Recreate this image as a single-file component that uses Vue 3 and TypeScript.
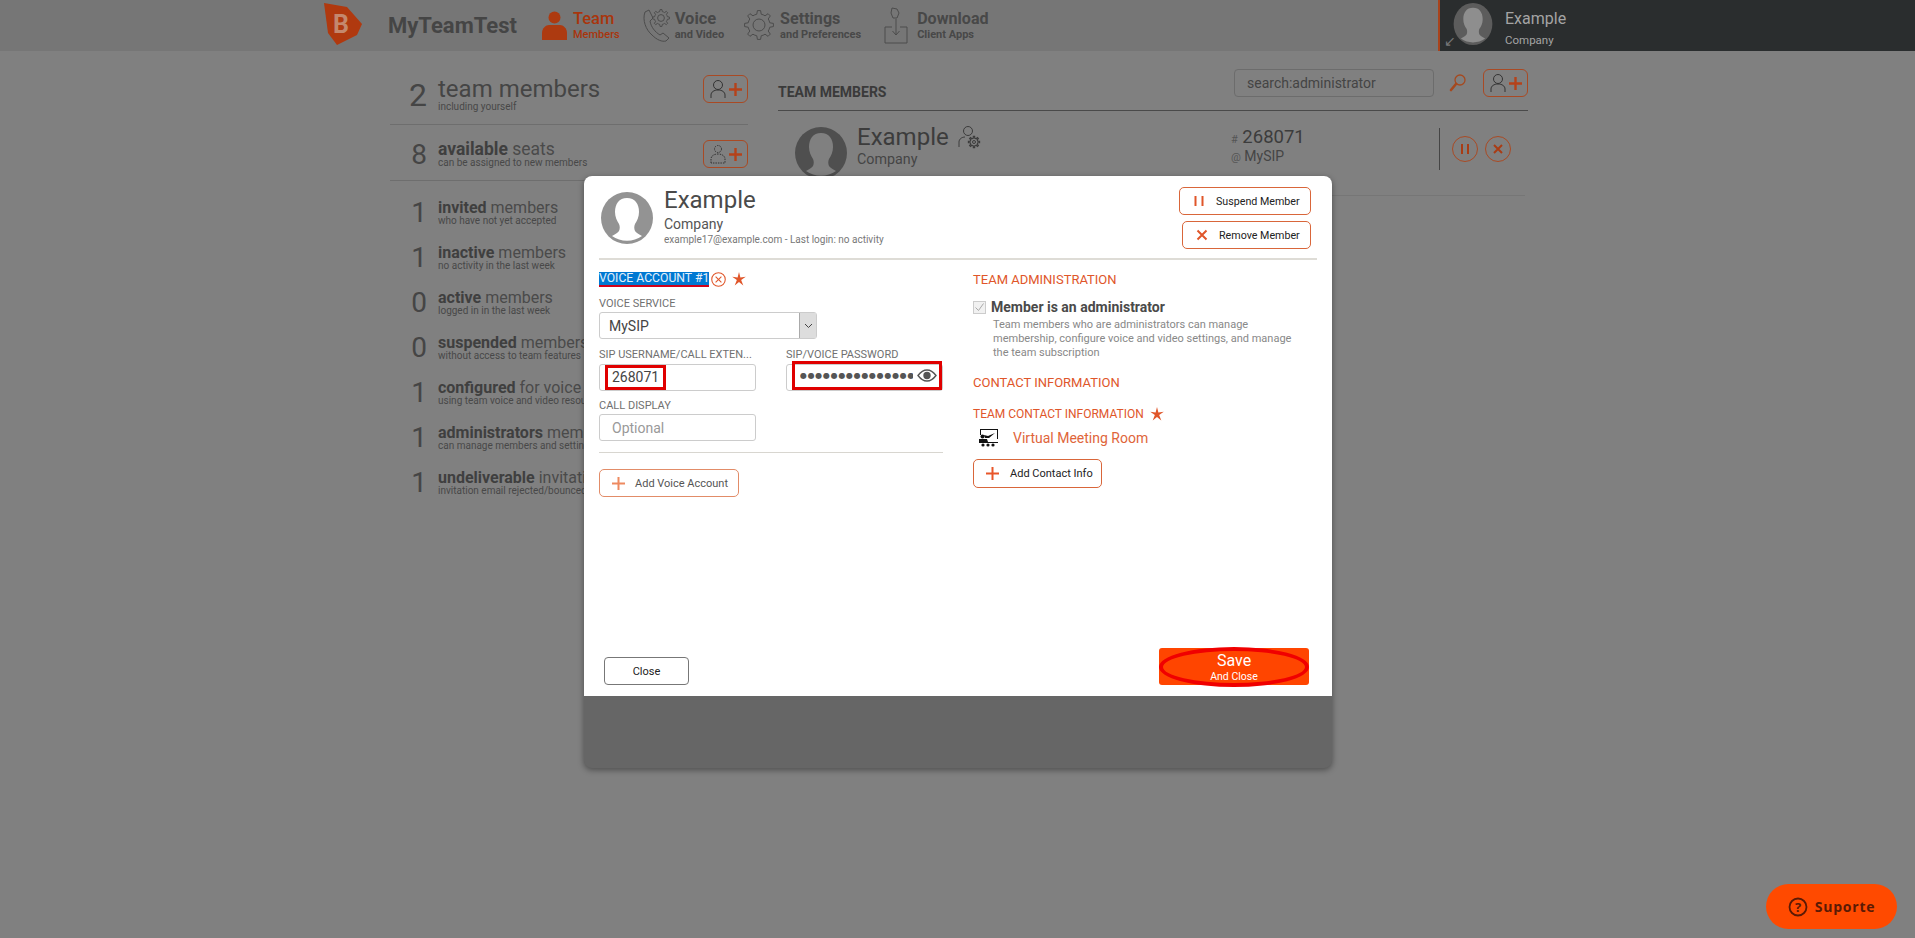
<script setup lang="ts">
const stats = [
  { n: 1, bold: 'invited', rest: ' members', sub: 'who have not yet accepted' },
  { n: 1, bold: 'inactive', rest: ' members', sub: 'no activity in the last week' },
  { n: 0, bold: 'active', rest: ' members', sub: 'logged in in the last week' },
  { n: 0, bold: 'suspended', rest: ' members', sub: 'without access to team features' },
  { n: 1, bold: 'configured', rest: ' for voice and video', sub: 'using team voice and video resources' },
  { n: 1, bold: 'administrators', rest: ' members', sub: 'can manage members and settings' },
  { n: 1, bold: 'undeliverable', rest: ' invitations', sub: 'invitation email rejected/bounced' }
]

// gear outline used by the nav icons
function gear(cx: number, cy: number, r1: number, r2: number, teeth: number) {
  const pts: string[] = []
  const step = (Math.PI * 2) / teeth
  for (let i = 0; i < teeth; i++) {
    const a = i * step
    const list: [number, number][] = [
      [r1, a - step * 0.5],
      [r1, a - step * 0.26],
      [r2, a - step * 0.14],
      [r2, a + step * 0.14],
      [r1, a + step * 0.26]
    ]
    for (const [r, t] of list) {
      pts.push((cx + r * Math.cos(t)).toFixed(2) + ',' + (cy + r * Math.sin(t)).toFixed(2))
    }
  }
  return 'M' + pts.join('L') + 'Z'
}
const bust = 'M26 6c-8 0-12 6-12 14 0 5 2 9 4 12 1 2 1 5 0 7-1 2-4 3-7 5a26 26 0 0 0 30 0c-3-2-6-3-7-5-1-2-1-5 0-7 2-3 4-7 4-12 0-8-4-14-12-14z'
const starPts = '6.500,0 7.800,5 12.800,4.500 8.500,7.500 10.500,12.500 6.500,9.200 2.500,12.500 4.500,7.500 0.200,4.500 5.200,5'
</script>

<template>
  <div class="page">
    <header class="topbar">
      <svg class="logo" width="38" height="43" viewBox="0 0 38 43">
        <polygon points="0,0 23,4 38,21 33,32 13,42 4,30" fill="#b0390f" />
        <text x="17" y="30" text-anchor="middle" class="logo-b">B</text>
      </svg>
      <div class="brand">MyTeamTest</div>

      <div class="nav nav-team">
        <svg width="25" height="30" viewBox="0 0 25 30">
          <circle cx="12.500" cy="6.500" r="6" fill="#ad3a10" />
          <path d="M0 29V22c0-5 4-8 7-8h11c3 0 7 3 7 8v7z" fill="#ad3a10" />
        </svg>
        <div class="nav-text active"><b>Team</b><span>Members</span></div>
      </div>

      <div class="nav nav-voice">
        <svg width="30" height="40" viewBox="0 0 30 40" fill="none" stroke="#4c4c4c" stroke-width="1">
          <path d="M4 7 8 5l4 8-3 3c1 6 5 11 10 14l3-2 6 5-3 3c-4 1-9-1-14-6C5 25 1 15 4 7z" />
          <path :d="gear(20, 13, 6.500, 8.500, 8)" />
          <circle cx="20" cy="13" r="3.400" />
        </svg>
        <div class="nav-text"><b>Voice</b><span>and Video</span></div>
      </div>

      <div class="nav nav-settings">
        <svg width="30" height="40" viewBox="0 0 30 40" fill="none" stroke="#4c4c4c" stroke-width="1">
          <path :d="gear(15, 20, 11, 14.500, 8)" />
          <circle cx="15" cy="20" r="6" />
        </svg>
        <div class="nav-text"><b class="narrow">Settings</b><span>and Preferences</span></div>
      </div>

      <div class="nav nav-download">
        <svg width="24" height="40" viewBox="0 0 24 40" fill="none" stroke="#4c4c4c" stroke-width="1">
          <path d="M8 3l5 1 2 4-2 5-4 0-2-5z" />
          <path d="M12 14v16M8.500 26l3.500 4 3.500-4" />
          <path d="M8 22H1v16h22V22h-7" />
        </svg>
        <div class="nav-text"><b class="narrow">Download</b><span>Client Apps</span></div>
      </div>

      <div class="account">
        <span class="shrink">↙</span>
        <svg class="account-pic" width="42" height="42" viewBox="0 0 52 52">
          <ellipse cx="26" cy="26" rx="24" ry="26" fill="#5c5c5c" />
          <path :d="bust" fill="#8e8e8e" />
        </svg>
        <div class="account-text">
          <div class="account-name">Example</div>
          <div class="account-co">Company</div>
        </div>
      </div>
    </header>

    <div class="content">
      <aside class="side">
        <div class="stat stat-big">
          <div class="num num-big">2</div>
          <div class="stat-text">
            <div class="big-title">team members</div>
            <div class="sub">including yourself</div>
          </div>
          <button class="add-btn add-up">
            <svg width="32" height="20" viewBox="0 0 32 20" fill="none">
              <circle cx="8" cy="6" r="4.500" stroke="#333" />
              <path d="M1 19v-3c0-3 3-5 7-5s7 2 7 5v3" stroke="#333" />
              <path d="M25.500 4v13M19 10.500h13" stroke="#b5421a" stroke-width="2.400" />
            </svg>
          </button>
        </div>
        <div class="stat stat-big">
          <div class="num">8</div>
          <div class="stat-text">
            <div class="title title-seats"><b>available</b> seats</div>
            <div class="sub">can be assigned to new members</div>
          </div>
          <button class="add-btn add-seats">
            <svg width="32" height="20" viewBox="0 0 32 20" fill="none">
              <circle cx="8" cy="5" r="3.500" stroke="#333" stroke-dasharray="1.500 1" />
              <path d="M1 19v-4c0-3 3-5 7-5s7 2 7 5v4z" stroke="#333" stroke-dasharray="1.500 1" />
              <path d="M25.500 4v13M19 10.500h13" stroke="#b5421a" stroke-width="2.400" />
            </svg>
          </button>
        </div>
        <div class="stat-list">
          <div v-for="s in stats" :key="s.bold" class="stat-row">
            <div class="num">{{ s.n }}</div>
            <div class="stat-text">
              <div class="title"><b>{{ s.bold }}</b>{{ s.rest }}</div>
              <div class="sub">{{ s.sub }}</div>
            </div>
          </div>
        </div>
      </aside>

      <main class="main">
        <div class="main-head">
          <h2>TEAM MEMBERS</h2>
          <div class="search">search:administrator</div>
          <svg class="search-icon" width="18" height="22" viewBox="0 0 18 22" fill="none">
            <circle cx="11" cy="8" r="5" stroke="#a5491f" stroke-width="1.300" />
            <path d="M7 12 2 18" stroke="#a5491f" stroke-width="2.600" stroke-linecap="round" />
          </svg>
          <button class="add-btn">
            <svg width="32" height="20" viewBox="0 0 32 20" fill="none">
              <circle cx="8" cy="6" r="4.500" stroke="#333" />
              <path d="M1 19v-3c0-3 3-5 7-5s7 2 7 5v3" stroke="#333" />
              <path d="M25.500 4v13M19 10.500h13" stroke="#b5421a" stroke-width="2.400" />
            </svg>
          </button>
        </div>
        <div class="member">
          <svg class="member-pic" width="52" height="52" viewBox="0 0 52 52">
            <circle cx="26" cy="26" r="26" fill="#4f4f4f" />
            <path :d="bust" fill="#808080" />
          </svg>
          <div class="member-id">
            <div class="member-name">
              Example
              <svg width="24" height="26" viewBox="0 0 24 26" fill="none" stroke="#3c3c3c">
                <circle cx="10" cy="6" r="4.500" />
                <path d="M1 22v-5c0-3 3-5 6-5" />
                <path :d="gear(16, 17, 3.800, 5.600, 8)" stroke-width="1.200" />
                <circle cx="16" cy="17" r="1.500" />
              </svg>
            </div>
            <div class="member-co">Company</div>
          </div>
          <div class="member-voice">
            <div class="ext"><small>#</small> 268071</div>
            <div class="svc"><small>@</small> MySIP</div>
          </div>
          <div class="member-actions">
            <button class="round-btn">
              <svg width="10" height="12" viewBox="0 0 10 12"><path d="M2 1v10M8 1v10" stroke="#a93c14" stroke-width="2" /></svg>
            </button>
            <button class="round-btn">
              <svg width="12" height="12" viewBox="0 0 12 12"><path d="M2 2l8 8M10 2l-8 8" stroke="#a93c14" stroke-width="2" /></svg>
            </button>
          </div>
        </div>
      </main>
    </div>

    <section class="modal">
      <div class="sheet">
        <div class="sheet-head">
          <svg width="52" height="52" viewBox="0 0 52 52">
            <circle cx="26" cy="26" r="26" fill="#939393" />
            <path :d="bust" fill="#fff" />
          </svg>
          <div class="who">
            <div class="who-name">Example</div>
            <div class="who-co">Company</div>
            <div class="who-mail">example17@example.com - Last login: no activity</div>
          </div>
          <div class="head-actions">
            <button class="btn btn-wide">
              <svg width="12" height="12" viewBox="0 0 12 12"><path d="M2.500 1v10M9.500 1v10" stroke="#e0562a" stroke-width="2" /></svg>
              <span>Suspend Member</span>
            </button>
            <button class="btn btn-wide btn-remove">
              <svg width="12" height="12" viewBox="0 0 12 12"><path d="M1.500 1.500l9 9M10.500 1.500l-9 9" stroke="#e0562a" stroke-width="2" /></svg>
              <span>Remove Member</span>
            </button>
          </div>
        </div>

        <div class="columns">
          <div class="col">
            <div class="account-line">
              <span class="selected">VOICE ACCOUNT #1</span>
              <svg width="15" height="15" viewBox="0 0 14 14" fill="none" stroke="#e0562a">
                <circle cx="7" cy="7" r="6.300" />
                <path d="M4.300 4.300l5.400 5.400M9.700 4.300l-5.400 5.400" />
              </svg>
              <svg class="star" width="14" height="14" viewBox="0 0 13 13"><polygon :points="starPts" fill="#e0562a" /></svg>
            </div>

            <label class="field-label">VOICE SERVICE</label>
            <div class="select">
              <span>MySIP</span>
              <div class="select-arrow">
                <svg width="9" height="6" viewBox="0 0 9 6" fill="none"><path d="M1 1l3.500 3.500L8 1" stroke="#444" /></svg>
              </div>
            </div>

            <div class="pair">
              <div class="pair-item">
                <label class="field-label">SIP USERNAME/CALL EXTEN...</label>
                <div class="input">
                  <span class="mark-text">268071</span>
                </div>
              </div>
              <div class="pair-item pair-pass">
                <label class="field-label">SIP/VOICE PASSWORD</label>
                <div class="input">
                  <div class="mark-pass">
                    <span class="dots">●●●●●●●●●●●●●●●●●</span>
                    <svg width="20" height="13" viewBox="0 0 20 13" fill="none" stroke="#555" stroke-width="1.400">
                      <path d="M1 6.500C4 2.500 7 1 10 1s6 1.500 9 5.500c-3 4-6 5.500-9 5.500S4 10.500 1 6.500z" />
                      <circle cx="10" cy="6.500" r="3" fill="#555" />
                    </svg>
                  </div>
                </div>
              </div>
            </div>

            <label class="field-label">CALL DISPLAY</label>
            <div class="input"><span class="placeholder">Optional</span></div>

            <div class="col-rule"></div>

            <button class="btn btn-voice">
              <svg width="13" height="13" viewBox="0 0 13 13"><path d="M6.500 0v13M0 6.500h13" stroke="#ee8a60" stroke-width="2" /></svg>
              <span>Add Voice Account</span>
            </button>
          </div>

          <div class="col">
            <div class="section-title">TEAM ADMINISTRATION</div>
            <div class="admin-line">
              <span class="check">
                <svg width="11" height="11" viewBox="0 0 11 11" fill="none"><path d="M1.500 5.500l3 3 5-7" stroke="#aaa" /></svg>
              </span>
              <b>Member is an administrator</b>
            </div>
            <p class="admin-desc">Team members who are administrators can manage membership, configure voice and video settings, and manage the team subscription</p>

            <div class="section-title section-contact">CONTACT INFORMATION</div>
            <div class="contact-label">
              TEAM CONTACT INFORMATION
              <svg class="star" width="14" height="14" viewBox="0 0 13 13"><polygon :points="starPts" fill="#e0562a" /></svg>
            </div>
            <div class="room">
              <svg width="19" height="18" viewBox="0 0 19 18">
                <path d="M1 0h18v10h-1V1H2v5H1z" fill="#111" />
                <path d="M5 6l4 1 7-3-6 5H6z" fill="#111" />
                <circle cx="3.500" cy="7.500" r="2" fill="#111" />
                <path d="M0 13v-3h8l1 3z" fill="#111" />
                <rect x="0" y="13" width="19" height="1" fill="#111" />
                <circle cx="4" cy="16" r="1.600" fill="#111" />
                <circle cx="9" cy="16" r="1.600" fill="#111" />
                <circle cx="14" cy="16" r="1.600" fill="#111" />
              </svg>
              <span>Virtual Meeting Room</span>
            </div>
            <button class="btn btn-contact">
              <svg width="13" height="13" viewBox="0 0 13 13"><path d="M6.500 0v13M0 6.500h13" stroke="#e8562a" stroke-width="2" /></svg>
              <span>Add Contact Info</span>
            </button>
          </div>
        </div>

        <div class="sheet-foot">
          <button class="btn-close">Close</button>
          <button class="btn-save">
            <span class="save-main">Save</span>
            <span class="save-sub">And Close</span>
            <span class="save-ring"></span>
          </button>
        </div>
      </div>
    </section>

    <button class="support">
      <svg width="20" height="20" viewBox="0 0 20 20" fill="none">
        <circle cx="10" cy="10" r="8.500" stroke="#5a1a05" stroke-width="1.800" />
        <text x="10" y="14.500" text-anchor="middle" class="support-q">?</text>
      </svg>
      <span>Suporte</span>
    </button>
  </div>
</template>

<style scoped>
.page { position: relative; width: 100%; height: 938px; overflow: hidden; background: #808080; font-family: Roboto, 'Open Sans', sans-serif; color: #404040; }
button { font-family: inherit; cursor: pointer; }

.topbar { height: 51px; background: #767676; display: flex; align-items: flex-start; padding-left: 324px; box-sizing: border-box; }
.logo { margin-top: 3px; flex-shrink: 0; }
.logo-b { font-size: 25px; font-weight: 700; fill: #c4886e; font-family: Roboto, sans-serif; }
.brand { margin-left: 26px; font-size: 22px; font-weight: 700; color: #454545; line-height: 51px; }
.nav { display: flex; gap: 6px; align-items: flex-start; }
.nav svg { margin-top: 5px; flex-shrink: 0; }
.nav-team { margin-left: 25px; gap: 6px; }
.nav-team svg { margin-top: 11px; }
.nav-voice { margin-left: 21px; gap: 4px; }
.nav-settings { margin-left: 20px; }
.nav-download { margin-left: 23px; gap: 9px; }
.nav-text { display: flex; flex-direction: column; margin-top: 9px; color: #484848; }
.nav-text b { font-size: 16.500px; font-weight: 700; line-height: 20px; }
.nav-text b.narrow { font-size: 16.100px; }
.nav-text span { font-size: 11px; font-weight: 700; line-height: 13px; margin-top: -1px; }
.nav-text.active { color: #a9350c; }
.nav-text.active b, .nav-text.active span { font-weight: 500; }

.account { margin-left: auto; width: 477px; height: 51px; box-sizing: border-box; background: #2a2d2e; border-left: 2px solid #a9431c; display: flex; position: relative; padding-left: 12px; }
.account-pic { margin-top: 3px; }
.shrink { position: absolute; left: 4px; bottom: 3px; font-size: 14px; color: #777; line-height: 14px; }
.account-text { margin-left: 11px; color: #a4a4a4; }
.account-name { font-size: 16px; line-height: 21px; margin-top: 8px; }
.account-co { font-size: 11.500px; line-height: 14px; margin-top: 4px; }

.content { display: flex; padding-left: 390px; }
.side { width: 358px; flex-shrink: 0; }
.stat { display: flex; border-bottom: 1px solid #6e6e6e; align-items: center; height: 56px; padding-top: 5px; box-sizing: border-box; position: relative; }
.stat:first-child { height: 74px; padding-top: 14px; }
.num { width: 37px; text-align: right; font-size: 28px; line-height: 30px; color: #454545; flex-shrink: 0; }
.num-big { font-size: 32px; }
.stat-text { margin-left: 11px; flex: 1; white-space: nowrap; }
.big-title { font-size: 24px; line-height: 24px; color: #454545; }
.title { font-size: 16px; line-height: 15px; color: #4a4a4a; }
.title-seats { font-size: 17.500px; }
.title b { font-weight: 700; color: #3f3f3f; }
.sub { font-size: 10px; line-height: 11px; color: #484848; }
.add-btn { width: 45px; height: 28px; padding: 0; background: none; border: 1px solid #a94a24; border-radius: 6px; display: flex; align-items: center; justify-content: center; flex-shrink: 0; }
.add-up { margin-top: -12px; }
.add-seats { margin-top: -3px; }
.stat-list { padding-top: 9px; }
.stat-row { display: flex; align-items: center; height: 45px; }

.main { width: 750px; margin-left: 30px; }
.main-head { display: flex; align-items: center; height: 60px; padding-top: 4px; box-sizing: border-box; border-bottom: 1px solid #4a4a4a; }
.main-head h2 { margin: 18px auto 0 0; font-size: 14px; font-weight: 700; color: #3a3a3a; white-space: nowrap; }
.search { width: 200px; height: 28px; box-sizing: border-box; border: 1px solid #6c6c6c; border-radius: 4px; padding-left: 12px; font-size: 14px; line-height: 26px; color: #444; }
.search-icon { margin-left: 15px; }
.main-head .add-btn { margin-left: 16px; }
.member { display: flex; height: 84px; margin-right: 3px; border-bottom: 1px solid #767676; position: relative; }
.member-pic { margin: 16px 0 0 17px; }
.member-id { margin-left: 10px; color: #3c3c3c; }
.member-name { font-size: 24px; line-height: 30px; margin-top: 11px; display: flex; gap: 9px; align-items: flex-start; }
.member-name svg { margin-top: 3px; }
.member-co { font-size: 14.300px; line-height: 18px; color: #454545; margin-top: -2px; }
.member-voice { position: absolute; left: 453px; top: 14px; }
.ext { font-size: 18.500px; line-height: 24px; color: #3c3c3c; }
.svc { font-size: 14px; line-height: 15px; color: #454545; margin-top: -3px; }
.member-voice small { font-size: 11px; color: #555; }
.member-actions { position: absolute; left: 661px; top: 17px; height: 42px; border-left: 1px solid #454545; padding-left: 12px; display: flex; gap: 7px; align-items: center; }
.round-btn { width: 26px; height: 26px; padding: 0; background: none; border: 1px solid #a94a24; border-radius: 50%; display: flex; align-items: center; justify-content: center; }

.modal { position: absolute; left: 584px; top: 176px; width: 748px; height: 592px; background: #666; border-radius: 8px; box-shadow: 0 2px 6px rgba(0, 0, 0, 0.4); }
.sheet { height: 520px; background: #fff; border-radius: 8px 8px 0 0; padding: 0 15px; box-sizing: border-box; display: flex; flex-direction: column; }
.sheet-head { display: flex; height: 84px; flex-shrink: 0; padding: 16px 0 0 2px; box-sizing: border-box; border-bottom: 2px solid #dedcd6; }
.who { margin-left: 11px; }
.who-name { font-size: 24px; line-height: 26px; color: #4a4a4a; margin-top: -5px; }
.who-co { font-size: 14px; line-height: 16px; color: #555; margin-top: 3px; }
.who-mail { font-size: 10px; line-height: 14px; color: #777; margin-top: 1px; }
.head-actions { margin-left: auto; margin-top: -5px; margin-right: 6px; display: flex; flex-direction: column; align-items: flex-end; gap: 6px; }
.btn { display: flex; align-items: center; background: #fff; border: 1px solid #d9663a; border-radius: 5px; padding: 0; height: 28px; box-sizing: border-box; }
.btn span { font-size: 10.700px; color: #222; white-space: nowrap; }
.btn-wide { width: 132px; padding-left: 13px; gap: 11px; }
.btn-remove { width: 129px; }
.columns { display: grid; grid-template-columns: 344px 344px; column-gap: 30px; padding-top: 9px; }
.account-line { display: flex; align-items: center; height: 20px; font-size: 12.200px; }
.selected { background: #0078d2; color: #e6f1fb; line-height: 13px; border-bottom: 2px solid #d0021b; margin-right: 2px; }
.star { margin-left: 6px; flex-shrink: 0; }
.field-label { display: block; font-size: 11px; line-height: 13px; color: #707070; margin-top: 8px; margin-bottom: 2px; white-space: nowrap; }
.select { width: 218px; height: 27px; box-sizing: border-box; border: 1px solid #ccc; border-radius: 3px; display: flex; align-items: center; justify-content: space-between; padding-left: 9px; font-size: 14px; color: #444; }
.select-arrow { width: 16px; height: 25px; background: #ddd; border-left: 1px solid #aaa; display: flex; align-items: center; justify-content: center; }
.pair { display: flex; margin-top: 9px; }
.pair .field-label { margin-top: 0; margin-bottom: 3px; }
.pair-item { width: 156.500px; }
.pair-pass { margin-left: 30.500px; }
.input { width: 156.500px; height: 27px; box-sizing: border-box; border: 1px solid #ccc; border-radius: 3px; display: flex; align-items: center; font-size: 14px; color: #444; position: relative; }
.mark-text { margin-left: 5px; border: 3px solid #e00000; padding: 0 4px; width: 61px; height: 25px; box-sizing: border-box; line-height: 19px; }
.mark-pass { position: absolute; left: 5px; top: -4px; width: 150px; height: 29px; box-sizing: border-box; border: 3px solid #e00000; display: flex; align-items: center; padding-left: 5px; gap: 4px; overflow: hidden; }
.dots { width: 113px; overflow: hidden; white-space: nowrap; font-size: 8px; letter-spacing: 0.700px; color: #555; flex-shrink: 0; font-family: 'DejaVu Sans', sans-serif; }
.placeholder { margin-left: 12px; color: #999; }
.col-rule { height: 1px; background: #d8d6d0; margin-top: 11px; }
.btn-voice { width: 140px; margin-top: 16px; padding-left: 12px; gap: 10px; border-color: #e28c68; }
.btn-voice span { font-size: 11px; color: #555; }
.section-title { font-size: 13px; line-height: 16px; color: #e0562a; margin-top: 3px; }
.admin-line { display: flex; align-items: center; gap: 5px; margin-top: 11px; font-size: 14px; color: #4a4a4a; }
.check { width: 13px; height: 13px; box-sizing: border-box; border: 1px solid #ccc; background: #f1f1f1; display: flex; align-items: center; justify-content: center; }
.admin-desc { margin: 3px 0 0 20px; font-size: 11px; line-height: 14px; color: #888; width: 310px; }
.section-contact { margin-top: 15px; }
.contact-label { margin-top: 15px; display: flex; align-items: center; font-size: 12px; line-height: 16px; color: #e0562a; white-space: nowrap; }
.contact-label .star { margin-left: 6px; }
.room { display: flex; align-items: center; gap: 15px; padding-left: 6px; margin-top: 7px; font-size: 14px; color: #e0653a; height: 18px; }
.btn-contact { width: 129px; margin-top: 12px; padding-left: 12px; gap: 11px; height: 29px; }
.btn-contact span { font-size: 11px; }
.sheet-foot { margin-top: auto; display: flex; justify-content: space-between; align-items: flex-end; padding: 0 8px 11px 5px; }
.btn-close { width: 85px; height: 28px; background: #fff; border: 1px solid #777; border-radius: 4px; font-size: 11px; color: #222; padding: 0; }
.btn-save { position: relative; width: 150px; height: 37px; background: #ff4500; border: none; border-radius: 3px; color: #fff; padding: 2px 0 0; display: flex; flex-direction: column; align-items: center; justify-content: center; }
.save-main { font-size: 16px; line-height: 17px; }
.save-sub { font-size: 10.500px; line-height: 13px; margin-top: 1px; }
.save-ring { position: absolute; left: 0; top: -1px; right: 0; bottom: -2px; border: 4px solid #f00000; border-radius: 50%; }

.support { position: absolute; left: 1766px; top: 884px; width: 131px; height: 45px; background: #ff4a00; border: none; border-radius: 23px; display: flex; align-items: center; justify-content: center; gap: 7px; color: #5a1a05; padding: 0; }
.support span { font-family: 'Open Sans', sans-serif; font-size: 14px; font-weight: 700; letter-spacing: 0.800px; }
.support-q { font-size: 13px; font-weight: 700; fill: #5a1a05; font-family: 'Open Sans', sans-serif; }
</style>

<style>
body { margin: 0; }
</style>
